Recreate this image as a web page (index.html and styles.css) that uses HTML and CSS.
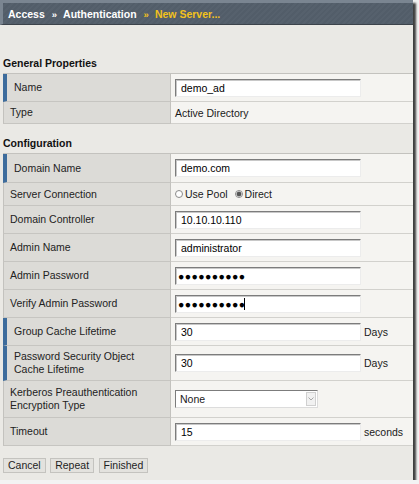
FILE: index.html
```html
<!DOCTYPE html>
<html lang="en">
<head>
<meta charset="utf-8">
<title>New Server</title>
<link rel="stylesheet" href="styles.css">
</head>
<body>
<div class="frame">
  <div class="crumbs">
    <span>Access</span><span class="sep">»</span><span>Authentication</span><span class="sep cur">»</span><span class="cur">New Server...</span>
  </div>

  <h2 class="sect first">General Properties</h2>
  <div class="props">
    <div class="row h28"><div class="lbl req">Name</div><div class="val"><input class="txt" type="text" value="demo_ad"></div></div>
    <div class="row h22"><div class="lbl">Type</div><div class="val">Active Directory</div></div>
  </div>

  <h2 class="sect second">Configuration</h2>
  <div class="props">
    <div class="row h29"><div class="lbl req">Domain Name</div><div class="val"><input class="txt" type="text" value="demo.com"></div></div>
    <div class="row h23"><div class="lbl">Server Connection</div>
      <div class="val radios">
        <label class="opt"><span class="radio"></span>Use Pool</label>
        <label class="opt"><span class="radio on"></span>Direct</label>
      </div>
    </div>
    <div class="row h28"><div class="lbl">Domain Controller</div><div class="val"><input class="txt" type="text" value="10.10.10.110"></div></div>
    <div class="row h28"><div class="lbl">Admin Name</div><div class="val"><input class="txt" type="text" value="administrator"></div></div>
    <div class="row h28"><div class="lbl">Admin Password</div><div class="val"><input class="txt pw" type="text" value="●●●●●●●●●●"></div></div>
    <div class="row h28"><div class="lbl">Verify Admin Password</div><div class="val"><span class="caretwrap"><input class="txt pw" type="text" value="●●●●●●●●●●"><span class="caret"></span></span></div></div>
    <div class="row h28"><div class="lbl req">Group Cache Lifetime</div><div class="val"><input class="txt" type="text" value="30"><span class="unit">Days</span></div></div>
    <div class="row h35"><div class="lbl req">Password Security Object Cache Lifetime</div><div class="val"><input class="txt" type="text" value="30"><span class="unit">Days</span></div></div>
    <div class="row h37"><div class="lbl">Kerberos Preauthentication Encryption Type</div>
      <div class="val">
        <div class="select"><span class="selval">None</span><span class="arrow"><svg width="6" height="4" viewBox="0 0 6 4"><path d="M0.5 0.5 L3 3 L5.5 0.5" fill="none" stroke="#a8a8a8" stroke-width="1"/></svg></span></div>
      </div>
    </div>
    <div class="row h28"><div class="lbl">Timeout</div><div class="val"><input class="txt" type="text" value="15"><span class="unit">seconds</span></div></div>
  </div>

  <div class="actions">
    <button class="btn" type="button">Cancel</button>
    <button class="btn" type="button">Repeat</button>
    <button class="btn" type="button">Finished</button>
  </div>
</div>
</body>
</html>
```

FILE: styles.css
```css
html, body {
  margin: 0;
  padding: 0;
}
body {
  background: #f3f3f3;
  font-family: "Liberation Sans", Arial, sans-serif;
  font-size: 10.5px;
  color: #1e1e1e;
}
.frame {
  width: 413px;
  height: 480px;
  background: #eae9e5;
  box-shadow: 3px 3px 2px #3f3f3f;
  box-sizing: border-box;
  overflow: hidden;
}
.crumbs {
  box-sizing: border-box;
  height: 25px;
  border-top: 3px solid #7a8591;
  border-left: 3px solid #7a8591;
  border-bottom: 1px solid #3c434b;
  background: repeating-linear-gradient(135deg, #525d69 0 2px, #56616d 2px 4px);
  padding: 1px 0 0 5px;
  line-height: 20px;
  font-weight: bold;
  color: #ffffff;
  display: flex;
  align-items: baseline;
}
.crumbs .sep {
  font-size: 9.5px;
  margin: 0 6px 0 7px;
}
.crumbs .cur {
  color: #f2c21c;
}
.sect {
  margin: 0 0 3px 3px;
  font-size: 10.5px;
  line-height: 14px;
  font-weight: bold;
  color: #111;
}
.sect.first { margin-top: 31px; }
.sect.second { margin-top: 12px; }
.props {
  margin-left: 3px;
  border-top: 1px solid #c3c2be;
}
.row {
  display: flex;
  box-sizing: border-box;
}
.h22 { height: 22px; }
.h23 { height: 23px; }
.h28 { height: 28px; }
.h29 { height: 29px; }
.h35 { height: 35px; }
.h37 { height: 37px; }
.lbl {
  box-sizing: border-box;
  width: 168px;
  flex: none;
  background: #dcdbd7;
  border-left: 1px solid #c3c2be;
  border-right: 1px solid #c3c2be;
  border-bottom: 1px solid #c6c5c1;
  padding: 0 8px 0 6px;
  display: flex;
  align-items: center;
  line-height: 13px;
  color: #222;
}
.lbl.req {
  border-left: 4px solid #3d6c9c;
  padding-left: 7px;
}
.val {
  flex: 1;
  box-sizing: border-box;
  background: #f5f4f1;
  border-bottom: 1px solid #d2d1cd;
  padding-left: 4px;
  display: flex;
  align-items: center;
  color: #1a1a1a;
}
.txt {
  box-sizing: border-box;
  width: 186px;
  height: 18px;
  margin: 0;
  border: 1px solid;
  border-color: #7c7c7c #ececec #ececec #7c7c7c;
  box-shadow: inset 1px 1px 0 #c8c8c8;
  background: #ffffff;
  padding: 0 4px 0 5px;
  font-family: "Liberation Sans", Arial, sans-serif;
  font-size: 10.5px;
  color: #000;
  outline: none;
}
.txt.pw {
  padding-left: 2px;
  letter-spacing: 0.4px;
}
.caretwrap {
  position: relative;
  display: inline-flex;
}
.caret {
  position: absolute;
  left: 69px;
  top: 3px;
  width: 1px;
  height: 12px;
  background: #000;
}
.unit {
  margin-left: 3px;
  color: #1a1a1a;
}
.radios {
  gap: 7px;
}
.opt {
  display: inline-flex;
  align-items: center;
  gap: 1px;
}
.radio {
  box-sizing: border-box;
  width: 8px;
  height: 8px;
  border-radius: 50%;
  border: 1px solid #8a8a8a;
  background: #fff;
  margin-right: 1px;
}
.radio.on {
  background: radial-gradient(circle, #555 0 2px, #bbb 2.5px, #fff 3px);
}
.select {
  box-sizing: border-box;
  width: 143px;
  height: 18px;
  border: 1px solid;
  border-color: #7c7c7c #dcdcdc #dcdcdc #7c7c7c;
  background: #fff;
  display: flex;
  align-items: center;
  justify-content: space-between;
  padding: 0 1px 0 4px;
}
.arrow {
  box-sizing: border-box;
  width: 10px;
  height: 14px;
  border: 1px solid #d0d0d0;
  background: #f1f1f1;
  display: flex;
  align-items: center;
  justify-content: center;
}
.actions {
  display: flex;
  gap: 4.5px;
  margin: 12px 0 0 3px;
}
.btn {
  box-sizing: border-box;
  height: 15px;
  margin: 0;
  padding: 0 4px;
  border: 1px solid #c4c3bf;
  background: #e3e2de;
  font-family: "Liberation Sans", Arial, sans-serif;
  font-size: 10.5px;
  line-height: 13px;
  color: #1e1e1e;
}
```
